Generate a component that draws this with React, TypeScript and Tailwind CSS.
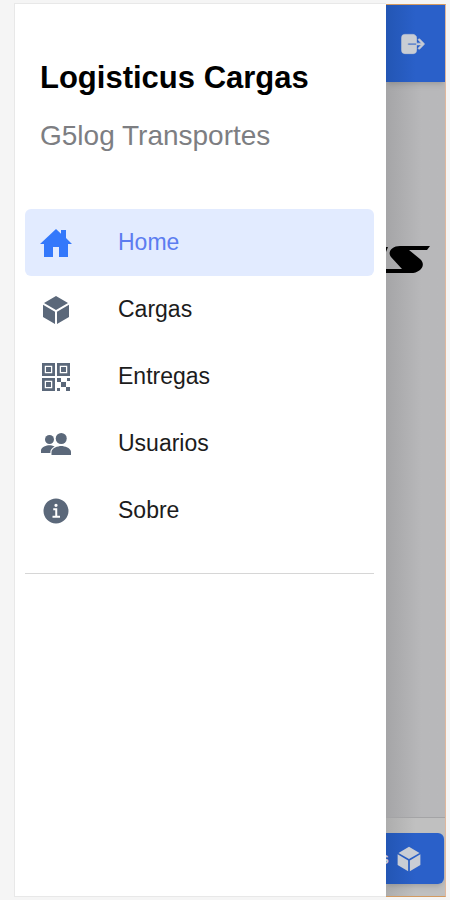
import React from 'react';
import type { IconType } from 'react-icons';
import {
  IoCubeSharp,
  IoHomeSharp,
  IoInformationCircleSharp,
  IoLogOut,
  IoPeopleSharp,
  IoQrCodeSharp,
} from 'react-icons/io5';

interface MenuItem {
  title: string;
  icon: IconType;
}

const items: MenuItem[] = [
  { title: 'Home', icon: IoHomeSharp },
  { title: 'Cargas', icon: IoCubeSharp },
  { title: 'Entregas', icon: IoQrCodeSharp },
  { title: 'Usuarios', icon: IoPeopleSharp },
  { title: 'Sobre', icon: IoInformationCircleSharp },
];

const SideMenu: React.FC = () => {
  return (
    <aside className="min-w-0 flex-1 border border-r-0 border-[#e8e8e8] bg-white pt-14 pr-3 pl-[10px]">
      <header className="px-[15px]">
        <h1 className="text-[31px] leading-9 font-bold text-black">Logisticus Cargas</h1>
        <p className="mt-6 text-[28px] leading-8 text-[#7d7e82]">G5log Transportes</p>
      </header>

      <nav className="mt-[57px] border-b border-[#d6d6d6] pb-[29px]">
        {items.map(({ title, icon: Icon }, index) => (
          <a
            key={title}
            href="#"
            aria-current={index === 0 ? 'page' : undefined}
            className={`flex h-[67px] items-center gap-[46px] rounded-md px-[15px] text-[23px] ${
              index === 0 ? 'bg-[#e2ebff] text-[#5c7cf0]' : 'text-[#1c1c1c]'
            }`}
          >
            <Icon className={`size-8 shrink-0 ${index === 0 ? 'text-[#3478fb]' : 'text-[#5b687a]'}`} />
            <span>{title}</span>
          </a>
        ))}
      </nav>
    </aside>
  );
};

const Page: React.FC = () => {
  return (
    <main className="mt-px flex w-[60px] shrink-0 flex-col overflow-hidden border-y border-r border-y-[#d39a60] border-r-[#e0b79c] bg-linear-to-r from-[#a5a5a7] to-[#b8b8ba] to-60%">
      <div className="flex h-[77px] items-center bg-linear-to-r from-[#2356b4] to-[#2a60c9] to-50% pl-[13px] shadow-md">
        <button type="button" aria-label="Sair">
          <IoLogOut className="size-7 text-[#c9cdd4]" stroke="currentColor" strokeWidth="12" />
        </button>
      </div>

      <svg viewBox="0 0 59 30" className="mt-[163px] h-[30px] w-[59px]" aria-hidden="true">
        <path
          d="M0 2h2L0 7ZM14 1h30l-3 4H23l11 9c7 6 0 14-9 14H0v-4h16L5 12C1 7 6 1 14 1Z"
          fill="#000"
        />
      </svg>

      <footer className="mt-auto border-t border-[#a4a4a6] bg-linear-to-r from-[#adadad] to-[#c0c0c0] to-50% pt-[15px] pb-3">
        <button
          type="button"
          className="flex h-[51px] w-[58px] items-center gap-[6px] rounded-r-md bg-linear-to-r from-[#2356b4] to-[#2a60c9] to-50% text-[#c9cdd4] shadow-md"
        >
          <span className="flex w-[3px] justify-end overflow-hidden text-base font-bold">s</span>
          <IoCubeSharp className="size-7" />
        </button>
      </footer>
    </main>
  );
};

const App: React.FC = () => {
  return (
    <div className="flex min-h-screen bg-[#f5f5f5] pt-[3px] pr-1 pb-[3px] pl-[14px] font-['Liberation_Sans',Arial,sans-serif]">
      <SideMenu />
      <Page />
    </div>
  );
};

export default App;
